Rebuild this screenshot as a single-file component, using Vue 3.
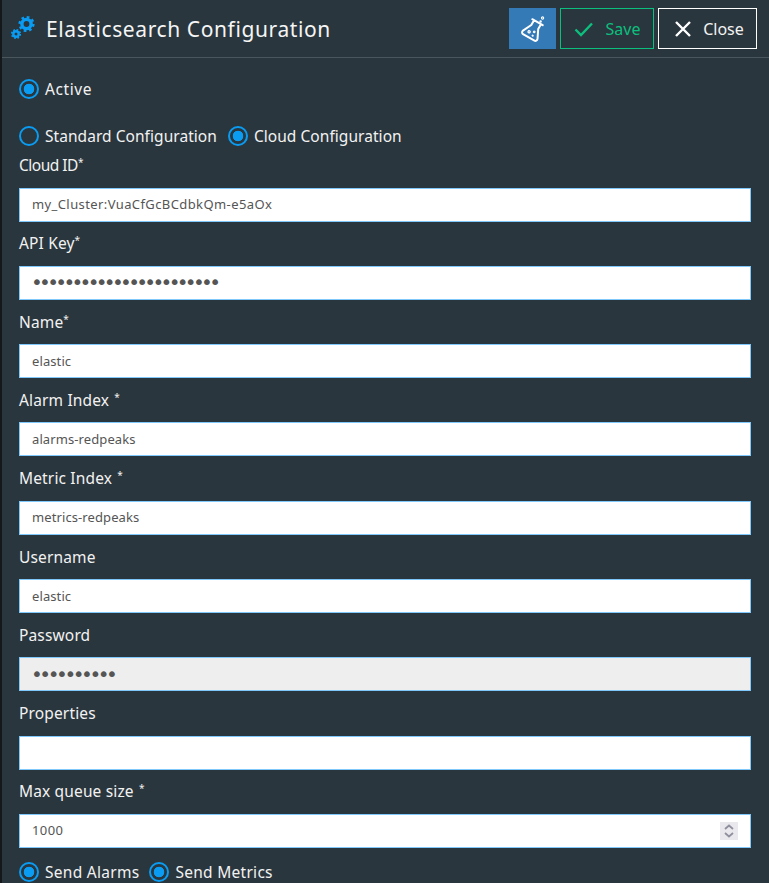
<script setup>
const fields = [
  { label: 'Cloud ID', mark: '*', value: 'my_Cluster:VuaCfGcBCdbkQm-e5aOx', wide: true, tight: true },
  { label: 'API Key', mark: '*', value: '•••••••••••••••••••••••', secret: true },
  { label: 'Name', mark: '*', value: 'elastic' },
  { label: 'Alarm Index', mark: '  *', value: 'alarms-redpeaks' },
  { label: 'Metric Index', mark: '  *', value: 'metrics-redpeaks' },
  { label: 'Username', mark: '', value: 'elastic' },
  { label: 'Password', mark: '', value: '••••••••••', secret: true, disabled: true },
  { label: 'Properties', mark: '', value: '' },
  { label: 'Max queue size', mark: '  *', value: '1000', spin: true, wide: true }
]
</script>

<template>
  <div class="page">
    <header class="head">
      <svg class="gears" width="24" height="32" viewBox="0 0 24 32" aria-hidden="true">
        <g fill="none" stroke="#0a9cf2">
          <circle cx="15.5" cy="12" r="4.6" stroke-width="3.4" />
          <circle cx="15.5" cy="12" r="6.9" stroke-width="2.4" stroke-dasharray="2.7 2.72" />
          <circle cx="5" cy="22" r="2.7" stroke-width="2.4" />
          <circle cx="5" cy="22" r="4.2" stroke-width="1.8" stroke-dasharray="1.7 1.6" />
        </g>
      </svg>
      <h1 class="title">Elasticsearch Configuration</h1>
      <div class="actions">
        <button class="btn test" type="button" aria-label="Test">
          <svg width="26" height="26" viewBox="0 0 26 26" fill="none" stroke="#fff" stroke-width="2" stroke-linejoin="round" stroke-linecap="round" aria-hidden="true">
            <g transform="rotate(30 13 14)">
              <path d="M7 5H19M9 5V10.5L4.6 19.5C4 21 5 22.5 6.4 22.5H19.6C21 22.5 22 21 21.4 19.5L17 10.5V5" />
              <circle cx="10.5" cy="17.5" r="1.1" stroke-width="1.3" />
              <circle cx="15" cy="15" r=".8" stroke-width="1.2" />
              <circle cx="15.5" cy="19" r=".6" stroke-width="1" />
            </g>
            <circle cx="20.6" cy="5.6" r=".7" stroke-width="1.1" />
            <circle cx="22.6" cy="2" r="1.1" stroke-width="1.1" />
          </svg>
        </button>
        <button class="btn save" type="button">
          <svg width="20" height="16" viewBox="0 0 20 16" fill="none" stroke="#0cbf7e" stroke-width="2.4" aria-hidden="true">
            <path d="M1.5 8.5 7 14 18 2.5" />
          </svg>
          <span>Save</span>
        </button>
        <button class="btn close" type="button">
          <svg width="16" height="16" viewBox="0 0 16 16" fill="none" stroke="#fff" stroke-width="2.4" aria-hidden="true">
            <path d="M1 1 15 15M15 1 1 15" />
          </svg>
          <span>Close</span>
        </button>
      </div>
    </header>

    <main class="body">
      <div class="radios active-row">
        <span class="radio"><i class="ring on"></i>Active</span>
      </div>
      <div class="radios mode-row">
        <span class="radio"><i class="ring"></i>Standard Configuration</span>
        <span class="radio"><i class="ring on"></i>Cloud Configuration</span>
      </div>

      <div v-for="f in fields" :key="f.label" class="field">
        <label class="label" :class="{ tight: f.tight }">{{ f.label }}<sup class="mark">{{ f.mark }}</sup></label>
        <div class="box" :class="{ disabled: f.disabled, secret: f.secret, wide: f.wide }">
          <span class="value">{{ f.value }}</span>
          <span v-if="f.spin" class="spin">
            <svg width="10" height="14" viewBox="0 0 10 14" fill="none" stroke="#8f8f9d" stroke-width="1.8" aria-hidden="true">
              <path d="M1 5 5 1.5 9 5M1 9 5 12.5 9 9" />
            </svg>
          </span>
        </div>
      </div>

      <div class="radios send-row">
        <span class="radio"><i class="ring on"></i>Send Alarms</span>
        <span class="radio"><i class="ring on"></i>Send Metrics</span>
      </div>
    </main>
  </div>
</template>

<style>
html, body { margin: 0; background: #2a363d; overflow: hidden; }
</style>

<style scoped>
.page {
  height: 883px;
  overflow: hidden;
  box-sizing: border-box;
  margin-left: 2px;
  background: #2a363d;
  color: #f2f2f2;
  font-family: "Noto Sans", "DejaVu Sans", sans-serif;
  box-shadow: -2px 0 0 #14181b;
}
.head {
  height: 57px;
  display: flex;
  align-items: center;
  padding: 0 12px 0 9px;
  border-bottom: 1px solid #4b565c;
}
.gears { flex: none; margin-top: -2px; }
.title {
  margin: 0 0 0 11px;
  font-size: 21px;
  font-weight: 400;
  color: #f5f5f5;
  letter-spacing: 0.6px;
}
.actions { margin-left: auto; display: flex; gap: 4px; }
.btn {
  height: 41px;
  box-sizing: border-box;
  display: flex;
  align-items: center;
  justify-content: center;
  gap: 12px;
  padding: 0;
  font: inherit;
  font-size: 16px;
  background: transparent;
  border: 1px solid #fff;
  color: #f2f2f2;
}
.test { width: 47px; background: #337ab7; border-color: #337ab7; }
.save { width: 94px; border-color: #0cbf7e; color: #0cbf7e; }
.close { width: 99px; gap: 12px; padding-left: 4px; }
.body { padding: 0 18px 0 17px; }
.radios { display: flex; gap: 10px; font-size: 15.5px; line-height: 20px; }
.radio { display: flex; align-items: center; gap: 6px; letter-spacing: 0.15px; }
.ring {
  width: 20px;
  height: 20px;
  box-sizing: border-box;
  border: 2px solid #0a9cf2;
  border-radius: 50%;
  display: block;
  flex: none;
}
.ring.on {
  background: radial-gradient(circle, #0a9cf2 0 5px, transparent 5.6px);
}
.active-row { margin-top: 21px; }
.active-row .radio { letter-spacing: 0.6px; }
.mode-row { margin-top: 27px; margin-bottom: -2.75px; gap: 11px; }
.mode-row .radio { letter-spacing: 0.05px; }
.field { height: 78.3px; display: flex; flex-direction: column; justify-content: flex-end; }
.label { font-size: 15.5px; line-height: 22px; margin-bottom: 11.5px; letter-spacing: 0.15px; white-space: pre; }
.label.tight { letter-spacing: -0.5px; }
.mark { font-size: 10px; line-height: 0; vertical-align: 5px; letter-spacing: 0; }
.box {
  height: 34px;
  box-sizing: border-box;
  display: flex;
  align-items: center;
  padding: 0 12px 1px;
  background: #fff;
  border: 1px solid #7ec8fb;
  color: #555;
  font-size: 13px;
  position: relative;
}
.value { letter-spacing: 0.1px; }
.wide .value { letter-spacing: 0.4px; }
.secret .value { font-size: 20px; letter-spacing: -3.7px; margin-left: -1px; font-family: "DejaVu Sans", sans-serif; }
.disabled .value { letter-spacing: -3.45px; }
.disabled { background: #eee; }
.spin {
  position: absolute;
  right: 12px;
  top: 7px;
  width: 18px;
  height: 18px;
  background: #e9e9ed;
  display: flex;
  align-items: center;
  justify-content: center;
}
.send-row { margin-top: 14px; }
.send-row .radio { letter-spacing: 0.28px; }
</style>
